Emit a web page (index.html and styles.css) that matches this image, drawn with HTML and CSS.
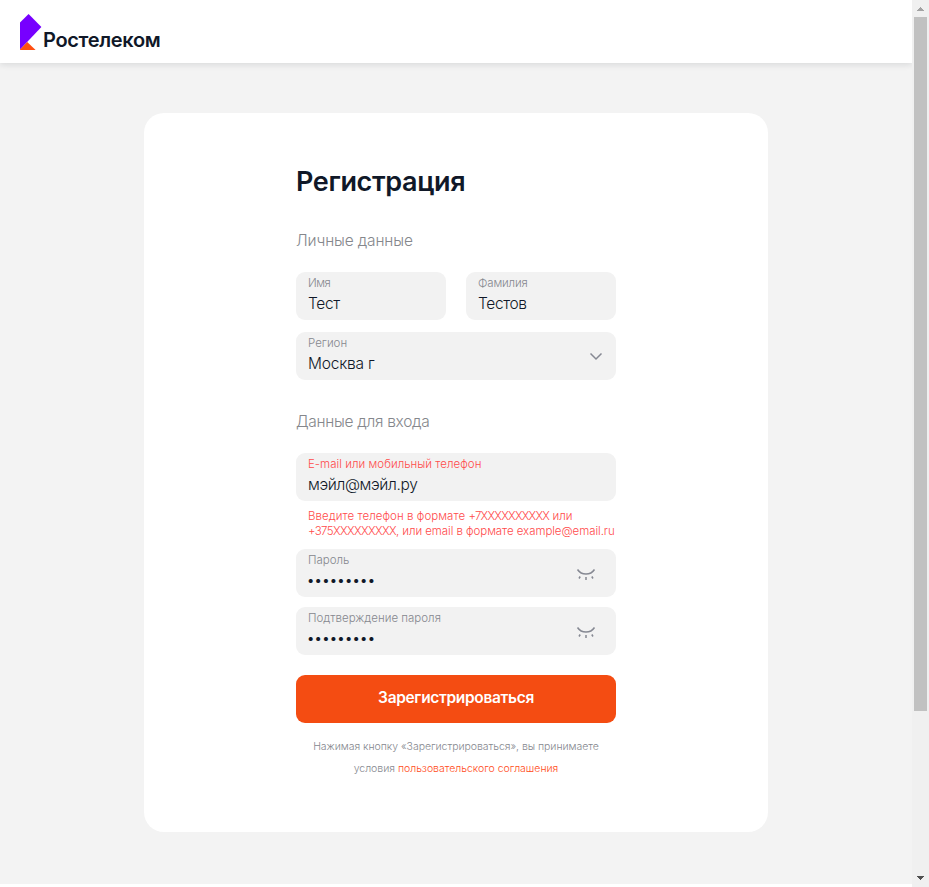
FILE: index.html
```html
<!DOCTYPE html>
<html lang="ru">
<head>
<meta charset="utf-8">
<title>Регистрация</title>
<link rel="stylesheet" href="styles.css">
</head>
<body>
<div class="window">
  <div class="page">
    <header class="header">
      <svg class="logo-mark" width="22" height="36" viewBox="0 0 22 36" aria-hidden="true">
        <path fill="#7700ff" d="M0 8.6 8.6 0 21.4 13 0 35.5z"/>
        <path fill="#ff4f12" d="M7.2 28 15.6 36H0v-.6z"/>
      </svg>
      <span class="logo-name">Ростелеком</span>
    </header>
    <main class="main">
      <section class="card">
        <form class="form">
          <h1 class="title">Регистрация</h1>
          <p class="section section-personal">Личные данные</p>
          <div class="row">
            <div class="field"><span class="label label-name">Имя</span><span class="value">Тест</span></div>
            <div class="field"><span class="label label-surname">Фамилия</span><span class="value">Тестов</span></div>
          </div>
          <div class="field">
            <span class="label">Регион</span><span class="value value-region">Москва г</span>
            <svg class="chevron" width="14" height="9" viewBox="0 0 14 9" aria-hidden="true"><path d="M1.5 1.5 7 7l5.500-5.500"/></svg>
          </div>
          <p class="section section-login">Данные для входа</p>
          <div class="field"><span class="label label-email">E-mail или мобильный телефон</span><span class="value">мэйл@мэйл.ру</span></div>
          <p class="error">Введите телефон в формате <span class="mask">+7XXXXXXXXXX</span> или<br><span class="error-second"><span class="mask mask-by">+375XXXXXXXXX</span>, или email в формате example@email.ru</span></p>
          <div class="field">
            <span class="label">Пароль</span><span class="value dots">•••••••••</span>
            <svg class="eye" width="20" height="14" viewBox="0 0 20 14" aria-hidden="true"><path d="M1.500 1.500C5.500 7.500 14.500 7.500 18.500 1.500M4.200 8.500 3 10.500M10 9v3M15.800 8.500 17 10.500"/></svg>
          </div>
          <div class="field field-confirm">
            <span class="label">Подтверждение пароля</span><span class="value dots">•••••••••</span>
            <svg class="eye" width="20" height="14" viewBox="0 0 20 14" aria-hidden="true"><path d="M1.500 1.500C5.500 7.500 14.500 7.500 18.500 1.500M4.200 8.500 3 10.500M10 9v3M15.800 8.500 17 10.500"/></svg>
          </div>
          <button class="submit" type="button">Зарегистрироваться</button>
          <p class="terms">Нажимая кнопку «Зарегистрироваться», вы принимаете<br><span class="terms-second">условия <a class="link">пользовательского соглашения</a></span></p>
        </form>
      </section>
    </main>
  </div>
  <div class="scrollbar">
    <svg class="arrow" width="17" height="17" viewBox="0 0 17 17" shape-rendering="crispEdges" aria-hidden="true"><path fill="#a3a3a3" d="M5 11 8.500 7 12 11z"/></svg>
    <div class="thumb"></div>
    <svg class="arrow arrow-down" width="17" height="17" viewBox="0 0 17 17" shape-rendering="crispEdges" aria-hidden="true"><path fill="#505050" d="M5 6 8.500 10 12 6z"/></svg>
  </div>
</div>
</body>
</html>
```
FILE: styles.css
```css
* { box-sizing: border-box; }
body {
  margin: 0;
  background: #fff;
  color: #101828;
  font-family: Inter, "Noto Sans", sans-serif;
  overflow: hidden;
}
p, h1 { margin: 0; }
.window { display: flex; height: 887px; }
.page { flex: 1; height: 884px; background: #f3f3f3; overflow: hidden; }
.header {
  position: relative;
  display: flex;
  align-items: flex-start;
  height: 63px;
  padding: 14px 20px 0;
  background: #fff;
  box-shadow: 0 2px 6px rgba(16, 24, 40, .11);
}
.logo-name {
  margin: 13px 0 0 1px;
  font-size: 20px;
  line-height: 26px;
  font-weight: 600;
  letter-spacing: -.32px;
}
.main { display: flex; justify-content: center; padding-top: 50px; }
.card {
  width: 624px;
  height: 719px;
  padding: 48px 152px 0;
  border-radius: 20px;
  background: #fff;
}
.form { width: 320px; }
.title { font-size: 27px; line-height: 42px; font-weight: 600; letter-spacing: -.36px; white-space: nowrap; }
.section { font-size: 15.500px; line-height: 20px; font-weight: 300; color: #85878c; }
.section-personal { margin: 28px 0 21px; letter-spacing: -.15px; }
.section-login { margin: 32px 0 21px; letter-spacing: -.3px; }
.row { display: grid; grid-template-columns: 150px 150px; gap: 20px; margin-bottom: 12px; }
.field {
  position: relative;
  display: flex;
  flex-direction: column;
  height: 48px;
  padding: 4px 12px 0;
  border-radius: 9px;
  background: #f2f2f2;
  white-space: nowrap;
}
.label { font-size: 11.500px; line-height: 15px; font-weight: 300; color: #85878e; }
.label-name { letter-spacing: -.5px; }
.label-surname { letter-spacing: -.15px; }
.label-email { color: #ff4b4b; letter-spacing: .03px; font-weight: 350; }
.value { font-size: 15.500px; line-height: 20px; margin-top: 3px; font-weight: 350; letter-spacing: -.36px; }
.value-region { letter-spacing: -.22px; }
.dots { margin: 2px 0 0 -1px; font-size: 13px; font-weight: 400; letter-spacing: .27px; }
.field-confirm { margin-top: 10px; }
.chevron, .eye {
  position: absolute;
  fill: none;
  stroke: #868993;
  stroke-width: 1.500;
}
.chevron { right: 13px; top: 20px; }
.eye { right: 20px; top: 19px; }
.error {
  height: 48px;
  padding: 8px 0 0 12px;
  font-size: 11.500px;
  line-height: 15px;
  font-weight: 350;
  letter-spacing: .05px;
  color: #ff4b4b;
  white-space: nowrap;
}
.error-second { letter-spacing: -.06px; }
.mask { letter-spacing: -.75px; }
.mask-by { letter-spacing: -.62px; }
.submit {
  display: block;
  width: 320px;
  height: 48px;
  margin: 20px 0 13px;
  padding: 0 0 2px;
  border: 0;
  border-radius: 9px;
  background: #f44c12;
  color: #fff;
  font: 600 15.500px/20px Inter, sans-serif;
  letter-spacing: -.33px;
}
.terms { font-size: 10.500px; line-height: 22px; font-weight: 300; letter-spacing: -.04px; text-align: center; color: #85878e; white-space: nowrap; }
.terms-second { letter-spacing: -.02px; }
.link { color: #ff4b20; font-weight: 350; }
.scrollbar { display: flex; flex-direction: column; width: 17px; background: #f0f0f0; }
.arrow { display: block; }
.arrow-down { margin-top: auto; }
.thumb { width: 13px; height: 694px; margin: 0 2px; background: #c1c1c1; }
```
